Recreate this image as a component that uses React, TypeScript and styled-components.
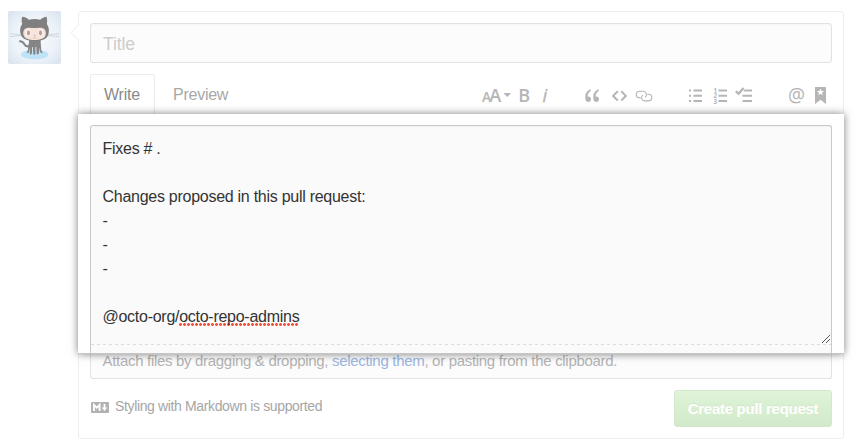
import React from "react";
import styled, { createGlobalStyle, css } from "styled-components";

const Global = createGlobalStyle`
  * { box-sizing: border-box; }
  body { margin: 0; background: #fff; font-family: "Liberation Sans", Arial, sans-serif; color: #333; }
`;

const Page = styled.main`
  display: flex;
  align-items: flex-start;
  width: 856px;
  height: 447px;
  padding: 11px 0 0 8px;
  overflow: hidden;
`;

const Avatar = styled.svg`
  width: 53px;
  height: 53px;
  border-radius: 2px;
  flex: none;
`;

const Card = styled.section`
  position: relative;
  width: 766px;
  height: 428px;
  margin-left: 17px;
  border: 1px solid #eee;
  border-radius: 3px;
  display: flex;
  flex-direction: column;
`;

const Pointer = styled.svg`
  position: absolute;
  left: -9px;
  top: 12px;
  width: 9px;
  height: 17px;
`;

const Header = styled.header`
  padding: 11px 11px 0;
  height: 102px;
  flex: none;
`;

const TitleField = styled.div`
  height: 40px;
  padding: 0 12px;
  border: 1px solid #e2e2e2;
  border-radius: 3px;
  background: #fcfcfc;
  box-shadow: inset 0 1px 2px rgba(0, 0, 0, 0.03);
  color: #cdcdcd;
  font-size: 17.5px;
  letter-spacing: -0.1px;
  line-height: 40px;
`;

const TabBar = styled.nav`
  display: flex;
  height: 41px;
  margin-top: 11px;
`;

const Tab = styled.span<{ $active?: boolean }>`
  height: 41px;
  padding: 0 14px;
  font-size: 16px;
  letter-spacing: -0.25px;
  line-height: 39px;
  color: #a8a8a8;
  border: 1px solid transparent;
  border-bottom: 0;
  white-space: nowrap;
  ${(p) =>
    p.$active &&
    css`
      width: 65px;
      margin-right: 3px;
      padding: 0 13px;
      color: #8a8a8a;
      border-color: #ebebeb;
      border-radius: 3px 3px 0 0;
    `}
`;

const Toolbar = styled.div`
  display: flex;
  margin: 12px 5px 0 auto;
`;

const Tool = styled.svg<{ $gap?: number }>`
  height: 20px;
  flex: none;
  margin-left: ${(p) => p.$gap ?? 0}px;
  fill: #b5b5b5;
  color: #b5b5b5;
  overflow: visible;
  font-family: "Open Sans", sans-serif;
`;

const Spotlight = styled.div`
  position: relative;
  z-index: 1;
  flex: none;
  height: 240px;
  margin: 0 -1px -1px;
  padding: 11px 12px 0;
  background: #fff;
  border-bottom: 1px solid #c6c6c6;
  box-shadow: 0 0 8px rgba(0, 0, 0, 0.5);
`;

const Editor = styled.div`
  height: 228px;
  border: 1px solid #c9c9c9;
  border-bottom: 0;
  border-radius: 3px 3px 0 0;
  background: #fafafa;
  box-shadow: inset 0 1px 1px rgba(0, 0, 0, 0.03);
`;

const Body = styled.div`
  position: relative;
  height: 219px;
  padding: 11px 11.5px 0;
  font-size: 16px;
  letter-spacing: -0.27px;
  line-height: 24px;
  white-space: pre-wrap;
  background: repeating-linear-gradient(90deg, #dcdcdc 0 3px, transparent 3px 6px) left bottom / 100% 1px no-repeat;
`;

const Misspelled = styled.span`
  padding-bottom: 1px;
  background: radial-gradient(circle at 1.5px 1.5px, #f0523a 1.1px, transparent 1.7px) left bottom / 4px 3px repeat-x;
`;

const Grip = styled.svg`
  position: absolute;
  right: 1px;
  bottom: 2px;
  width: 8px;
  height: 8px;
`;

const Attach = styled.div`
  flex: none;
  height: 26px;
  margin: 0 11px;
  padding: 0 11.5px;
  border: 1px solid #e3e3e3;
  border-top: 0;
  border-radius: 0 0 3px 3px;
  background: #fcfcfc;
  font-size: 15px;
  letter-spacing: -0.31px;
  line-height: 16px;
  color: #b3b3b3;
  white-space: nowrap;
`;

const Link = styled.span`
  color: #9ab5df;
`;

const Footer = styled.footer`
  display: flex;
  justify-content: space-between;
  margin: 11px 11px 0;
`;

const Hint = styled.div`
  display: flex;
  gap: 6px;
  font-size: 14px;
  letter-spacing: -0.36px;
  line-height: 33px;
  color: #a6a6a6;
`;

const MarkdownMark = styled.svg`
  width: 19px;
  height: 11px;
  margin-top: 12px;
`;

const Submit = styled.button`
  width: 158px;
  height: 37px;
  padding: 0;
  border: 1px solid #d3e7cb;
  border-radius: 3px;
  background: linear-gradient(#dff4d8, #d2e9ca);
  color: #fff;
  font: bold 15px/35px "Liberation Sans", Arial, sans-serif;
  letter-spacing: -0.28px;
  text-shadow: 0 -1px 0 rgba(0, 0, 0, 0.06);
`;

function Octocat() {
  return (
    <Avatar viewBox="0 0 53 53">
      <defs>
        <radialGradient id="sky" cx=".5" cy=".5" r=".72">
          <stop offset="0" stopColor="#f6f9fc" />
          <stop offset=".55" stopColor="#edf3f9" />
          <stop offset="1" stopColor="#d7e2ed" />
        </radialGradient>
      </defs>
      <rect width="53" height="53" fill="url(#sky)" />
      <ellipse cx="26.7" cy="43.5" rx="13.7" ry="5" fill="#c0e4f7" />
      <path d="M12 30.2c3 0 3.8 1.7 4.5 3.2.8 1.8 2.8 2.3 5.5 1.7" fill="none" stroke="#858585" strokeWidth="2.1" strokeLinecap="round" />
      <path d="M21.3 28.5h11.2l.7 10c.1 2 1.2 3 1.8 3.6-1.6.5-3-.5-3.3-2.3l-.5-3.3-.3 5.8c0 1-1.4 1.4-2.2.7l-.4-7h-.8l-.1 7.2c-.5.8-2 .5-2.1-.5l-.4-6.7h-.6l-.5 6.8c-.4 1-1.8 1-2 .2l-.1-6.4-.6 4c-.2 1.4-1.5 1.8-2.7 1.3 1.1-1 1.5-2.2 1.6-3.9z" fill="#858585" />
      <path d="M14.2 5.8c2.8.1 5 1.5 6.7 2.9 4-.8 7.5-.8 11.3 0 1.9-1.5 4-2.8 6.3-2.9.8 2.4.9 4.9.3 7.2 1.7 2.2 2.4 4.9 2 7.9-.6 6.6-5.2 8.9-14 8.9s-13.8-2.3-14.6-8.9c-.3-3.2.4-5.7 2-7.9-.7-2.2-.8-4.8 0-7.2z" fill="#808080" />
      <path d="M18.2 17.3c3-1 5.3-.2 8.3-.2s5.5-.8 8.4.2c3 1.2 3.7 5.2 2.2 8-1.4 2.7-5.2 3.7-10.6 3.7s-9-1-10.4-3.7c-1.5-2.9-1-6.8 2.1-8z" fill="#f6e3d9" />
      <ellipse cx="20.3" cy="22" rx="2.8" ry="3.6" fill="#fbf6f3" />
      <ellipse cx="32.7" cy="22" rx="2.8" ry="3.6" fill="#fbf6f3" />
      <ellipse cx="20.5" cy="22" rx="1.7" ry="2.4" fill="#c99a94" />
      <ellipse cx="32.5" cy="22" rx="1.7" ry="2.4" fill="#c99a94" />
      <circle cx="26.6" cy="24.7" r=".7" fill="#d0a79c" />
      <path d="M25 26.7q1.6 1.1 3.2 0" fill="none" stroke="#d0a79c" strokeWidth=".6" />
      <path d="M2 22.6l11 1.3M2 25.6l11-1M51 22.6l-11 1.3M51 25.6l-11-1" stroke="#c2c9cf" strokeWidth=".7" />
    </Avatar>
  );
}

function FormatTools() {
  return (
    <Toolbar>
      <Tool width="30" viewBox="0 0 30 20">
        <text x="0" y="16" fontSize="14" fontWeight="600" textLength="9" lengthAdjust="spacingAndGlyphs">A</text>
        <text x="7.2" y="16" fontSize="18" fontWeight="600" textLength="12" lengthAdjust="spacingAndGlyphs">A</text>
        <path d="M21.5 7h7.6l-3.8 4z" />
      </Tool>
      <Tool $gap={6} width="14" viewBox="0 0 14 20">
        <text x=".2" y="16" fontSize="18" fontWeight="600">B</text>
      </Tool>
      <Tool $gap={9} width="10" viewBox="0 0 10 20">
        <text x="1.5" y="16" fontSize="18.5" fontWeight="500" fontStyle="italic" stroke="currentColor" strokeWidth=".3">i</text>
      </Tool>
      <Tool $gap={33} width="16" viewBox="0 0 16 20">
        <path d="M6.6 3.2C3.3 4.3 1.2 7.2 1.2 11.3c0 3 1.2 4.7 3.1 4.7 1.6 0 2.7-1.2 2.7-2.8S6 10.5 4.5 10.5c-.5 0-.8.1-1 .2.2-2.8 1.4-4.8 3.5-6zM14.6 3.2c-3.3 1.1-5.4 4-5.4 8.1 0 3 1.2 4.7 3.1 4.7 1.6 0 2.7-1.2 2.7-2.8s-1-2.7-2.5-2.7c-.5 0-.8.1-1 .2.2-2.8 1.4-4.8 3.5-6z" />
      </Tool>
      <Tool $gap={11} width="17" viewBox="0 0 17 20">
        <path d="M6.7 5.3 2.2 9.9l4.5 4.6M10.3 5.3l4.5 4.6-4.5 4.6" fill="none" stroke="currentColor" strokeWidth="2" />
      </Tool>
      <Tool $gap={7} width="18" viewBox="0 0 18 20">
        <path d="M5.7 11.9H4.6a3.3 3.3 0 0 1 0-6.6h3.6a3.3 3.3 0 0 1 1.9 6M12.4 8.3h1.1a3.3 3.3 0 0 1 0 6.6H9.9a3.3 3.3 0 0 1-1.9-6" fill="none" stroke="currentColor" strokeWidth="1.1" />
      </Tool>
      <Tool $gap={35} width="15" viewBox="0 0 15 20">
        <path d="M1 3.5h2v2H1zm0 5.3h2v2H1zm0 5.2h2v2H1zM5.5 3.5H14v2H5.5zm0 5.3H14v2H5.5zm0 5.2H14v2H5.5z" />
      </Tool>
      <Tool $gap={10} width="15" viewBox="0 0 15 20">
        <text x=".5" y="6.5" fontSize="6.2" fontWeight="700">1</text>
        <text x=".5" y="12" fontSize="6.2" fontWeight="700">2</text>
        <text x=".5" y="17.5" fontSize="6.2" fontWeight="700">3</text>
        <path d="M5.5 3.5H14v2H5.5zm0 5.3H14v2H5.5zm0 5.2H14v2H5.5z" />
      </Tool>
      <Tool $gap={7} width="18" viewBox="0 0 18 20">
        <path d="m.8 5.2 2.7 2.6L8.6 2" fill="none" stroke="currentColor" strokeWidth="2.3" />
        <path d="M9.7 3.5H17v2H8.4zM7.5 8.8H17v2H7.5zm0 5.2H17v2H7.5z" />
      </Tool>
      <Tool $gap={35} width="17" viewBox="0 0 17 20">
        <text x="0" y="15.5" fontSize="19.5" textLength="17" lengthAdjust="spacingAndGlyphs">@</text>
      </Tool>
      <Tool $gap={9} width="13" viewBox="0 0 13 20">
        <path fillRule="evenodd" d="M1 1h11v17l-5.5-4.3L1 18zm5.5 1.5L5.5 5H2.8L5 6.7 4.2 9.3l2.3-1.6 2.3 1.6L8 6.7 10.2 5H7.5z" />
      </Tool>
    </Toolbar>
  );
}

export default function App() {
  return (
    <Page>
      <Global />
      <Octocat />
      <Card>
        <Pointer viewBox="0 0 9 17">
          <path d="M9 .5.9 8.5l8.1 8" fill="#fff" stroke="#eaeaea" />
        </Pointer>
        <Header>
          <TitleField>Title</TitleField>
          <TabBar>
            <Tab $active>Write</Tab>
            <Tab>Preview</Tab>
            <FormatTools />
          </TabBar>
        </Header>
        <Spotlight>
          <Editor>
            <Body>
              {"Fixes # .\n\nChanges proposed in this pull request:\n-\n-\n-\n\n@octo-org/"}
              <Misspelled>octo-repo-admins</Misspelled>
              <Grip viewBox="0 0 8 8">
                <path d="M0 8 8 0M4 8l4-4" stroke="#555" strokeWidth="1" />
              </Grip>
            </Body>
          </Editor>
        </Spotlight>
        <Attach>
          Attach files by dragging &amp; dropping, <Link>selecting them</Link>, or pasting from the clipboard.
        </Attach>
        <Footer>
          <Hint>
            <MarkdownMark viewBox="0 0 19 11">
              <rect x="1" width="18" height="11" rx="1" fill="#b2b2b2" />
              <path d="M4 9V2.8l2.8 3 2.8-3V9M14.5 2v4" fill="none" stroke="#fff" strokeWidth="1.8" />
              <path d="M11.7 5.5h5.6L14.5 9z" fill="#fff" />
            </MarkdownMark>
            Styling with Markdown is supported
          </Hint>
          <Submit>Create pull request</Submit>
        </Footer>
      </Card>
    </Page>
  );
}
